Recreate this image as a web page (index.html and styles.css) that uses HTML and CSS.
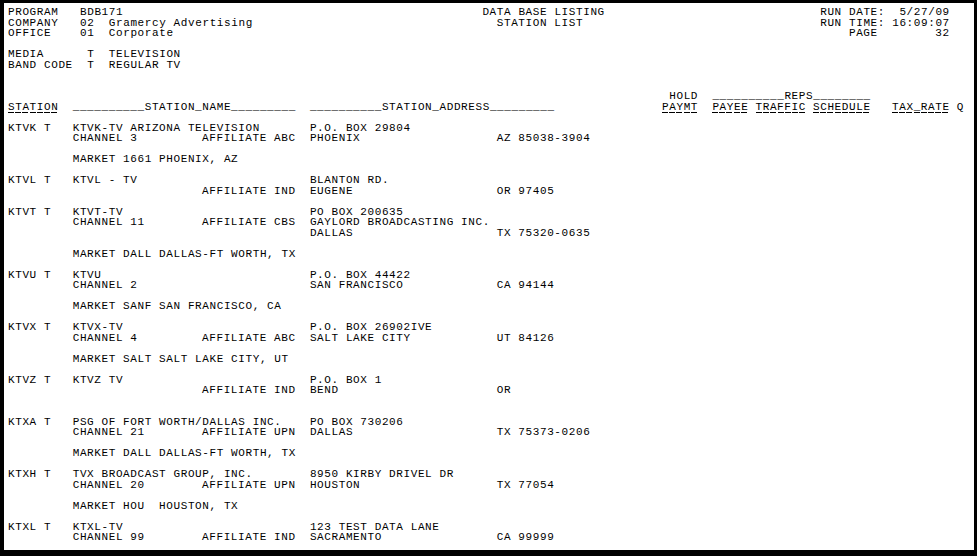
FILE: index.html
```html
<!DOCTYPE html>
<html lang="en">
<head>
<meta charset="utf-8">
<title>Data Base Listing - Station List</title>
<link rel="stylesheet" href="styles.css">
</head>
<body>
<main class="page">
  <div class="report">
    <div class="ln"><span class="c0">PROGRAM   BDB171</span><span class="c66">DATA BASE LISTING</span><span class="c113">RUN DATE:  5/27/09</span></div>
    <div class="ln"><span class="c0">COMPANY   02  Gramercy Advertising</span><span class="c68">STATION LIST</span><span class="c113">RUN TIME: 16:09:07</span></div>
    <div class="ln"><span class="c0">OFFICE    01  Corporate</span><span class="c117">PAGE        32</span></div>
    <div class="ln"></div>
    <div class="ln"><span class="c0">MEDIA      T  TELEVISION</span></div>
    <div class="ln"><span class="c0">BAND CODE  T  REGULAR TV</span></div>
    <div class="ln"></div>
    <div class="ln"></div>
    <div class="ln"><span class="c92">HOLD</span><span class="c98">__________REPS________</span></div>
    <div class="ln"><span class="c0 ul">STATION</span><span class="c9">__________STATION_NAME_________</span><span class="c42">__________STATION_ADDRESS_________</span><span class="c91 ul">PAYMT</span><span class="c98 ul">PAYEE</span><span class="c104 ul">TRAFFIC</span><span class="c112 ul">SCHEDULE</span><span class="c123 ul">TAX_RATE</span><span class="c132">Q</span></div>
    <div class="ln"></div>

    <div class="ln"><span class="c0">KTVK</span><span class="c5">T</span><span class="c9">KTVK-TV ARIZONA TELEVISION</span><span class="c42">P.O. BOX 29804</span></div>
    <div class="ln"><span class="c9">CHANNEL 3</span><span class="c27">AFFILIATE ABC</span><span class="c42">PHOENIX</span><span class="c68">AZ 85038-3904</span></div>
    <div class="ln"></div>
    <div class="ln"><span class="c9">MARKET 1661 PHOENIX, AZ</span></div>
    <div class="ln"></div>

    <div class="ln"><span class="c0">KTVL</span><span class="c5">T</span><span class="c9">KTVL - TV</span><span class="c42">BLANTON RD.</span></div>
    <div class="ln"><span class="c27">AFFILIATE IND</span><span class="c42">EUGENE</span><span class="c68">OR 97405</span></div>
    <div class="ln"></div>

    <div class="ln"><span class="c0">KTVT</span><span class="c5">T</span><span class="c9">KTVT-TV</span><span class="c42">PO BOX 200635</span></div>
    <div class="ln"><span class="c9">CHANNEL 11</span><span class="c27">AFFILIATE CBS</span><span class="c42">GAYLORD BROADCASTING INC.</span></div>
    <div class="ln"><span class="c42">DALLAS</span><span class="c68">TX 75320-0635</span></div>
    <div class="ln"></div>
    <div class="ln"><span class="c9">MARKET DALL DALLAS-FT WORTH, TX</span></div>
    <div class="ln"></div>

    <div class="ln"><span class="c0">KTVU</span><span class="c5">T</span><span class="c9">KTVU</span><span class="c42">P.O. BOX 44422</span></div>
    <div class="ln"><span class="c9">CHANNEL 2</span><span class="c42">SAN FRANCISCO</span><span class="c68">CA 94144</span></div>
    <div class="ln"></div>
    <div class="ln"><span class="c9">MARKET SANF SAN FRANCISCO, CA</span></div>
    <div class="ln"></div>

    <div class="ln"><span class="c0">KTVX</span><span class="c5">T</span><span class="c9">KTVX-TV</span><span class="c42">P.O. BOX 26902IVE</span></div>
    <div class="ln"><span class="c9">CHANNEL 4</span><span class="c27">AFFILIATE ABC</span><span class="c42">SALT LAKE CITY</span><span class="c68">UT 84126</span></div>
    <div class="ln"></div>
    <div class="ln"><span class="c9">MARKET SALT SALT LAKE CITY, UT</span></div>
    <div class="ln"></div>

    <div class="ln"><span class="c0">KTVZ</span><span class="c5">T</span><span class="c9">KTVZ TV</span><span class="c42">P.O. BOX 1</span></div>
    <div class="ln"><span class="c27">AFFILIATE IND</span><span class="c42">BEND</span><span class="c68">OR</span></div>
    <div class="ln"></div>
    <div class="ln"></div>

    <div class="ln"><span class="c0">KTXA</span><span class="c5">T</span><span class="c9">PSG OF FORT WORTH/DALLAS INC.</span><span class="c42">PO BOX 730206</span></div>
    <div class="ln"><span class="c9">CHANNEL 21</span><span class="c27">AFFILIATE UPN</span><span class="c42">DALLAS</span><span class="c68">TX 75373-0206</span></div>
    <div class="ln"></div>
    <div class="ln"><span class="c9">MARKET DALL DALLAS-FT WORTH, TX</span></div>
    <div class="ln"></div>

    <div class="ln"><span class="c0">KTXH</span><span class="c5">T</span><span class="c9">TVX BROADCAST GROUP, INC.</span><span class="c42">8950 KIRBY DRIVEL DR</span></div>
    <div class="ln"><span class="c9">CHANNEL 20</span><span class="c27">AFFILIATE UPN</span><span class="c42">HOUSTON</span><span class="c68">TX 77054</span></div>
    <div class="ln"></div>
    <div class="ln"><span class="c9">MARKET HOU  HOUSTON, TX</span></div>
    <div class="ln"></div>

    <div class="ln"><span class="c0">KTXL</span><span class="c5">T</span><span class="c9">KTXL-TV</span><span class="c42">123 TEST DATA LANE</span></div>
    <div class="ln"><span class="c9">CHANNEL 99</span><span class="c27">AFFILIATE IND</span><span class="c42">SACRAMENTO</span><span class="c68">CA 99999</span></div>
  </div>
</main>
</body>
</html>
```
FILE: styles.css
```css
html, body {
  margin: 0;
  padding: 0;
  background: #000;
  height: 556px;
  overflow: hidden;
}

.page {
  display: block;
  box-sizing: border-box;
  margin: 3px 3px 0 4px;
  width: 970px;
  height: 547px;
  background: #fff;
  padding: 4px 0 0 4px;
  color: #000;
  font-family: "Liberation Mono", "Courier New", monospace;
  font-size: 11px;
  letter-spacing: 0.6px;
  line-height: 10.5px;
  overflow: hidden;
}

.report {
  display: flex;
  flex-direction: column;
}

.ln {
  display: grid;
  grid-template-columns: repeat(133, 7.2px);
  grid-template-rows: 10.5px;
  height: 10.5px;
  white-space: pre;
}

.ln > span {
  justify-self: start;
  align-self: start;
  height: 10.5px;
}

.ul {
  background-image: repeating-linear-gradient(to right, #000 0, #000 6px, transparent 6px, transparent 7.2px);
  background-repeat: no-repeat;
  background-size: 100% 1px;
  background-position: 0 10px;
  height: 11px !important;
}

.c0 { grid-column-start: 1; }
.c5 { grid-column-start: 6; }
.c9 { grid-column-start: 10; }
.c27 { grid-column-start: 28; }
.c42 { grid-column-start: 43; }
.c66 { grid-column-start: 67; }
.c68 { grid-column-start: 69; }
.c91 { grid-column-start: 92; }
.c92 { grid-column-start: 93; }
.c98 { grid-column-start: 99; }
.c104 { grid-column-start: 105; }
.c112 { grid-column-start: 113; }
.c113 { grid-column-start: 114; }
.c117 { grid-column-start: 118; }
.c123 { grid-column-start: 124; }
.c132 { grid-column-start: 133; }
```
